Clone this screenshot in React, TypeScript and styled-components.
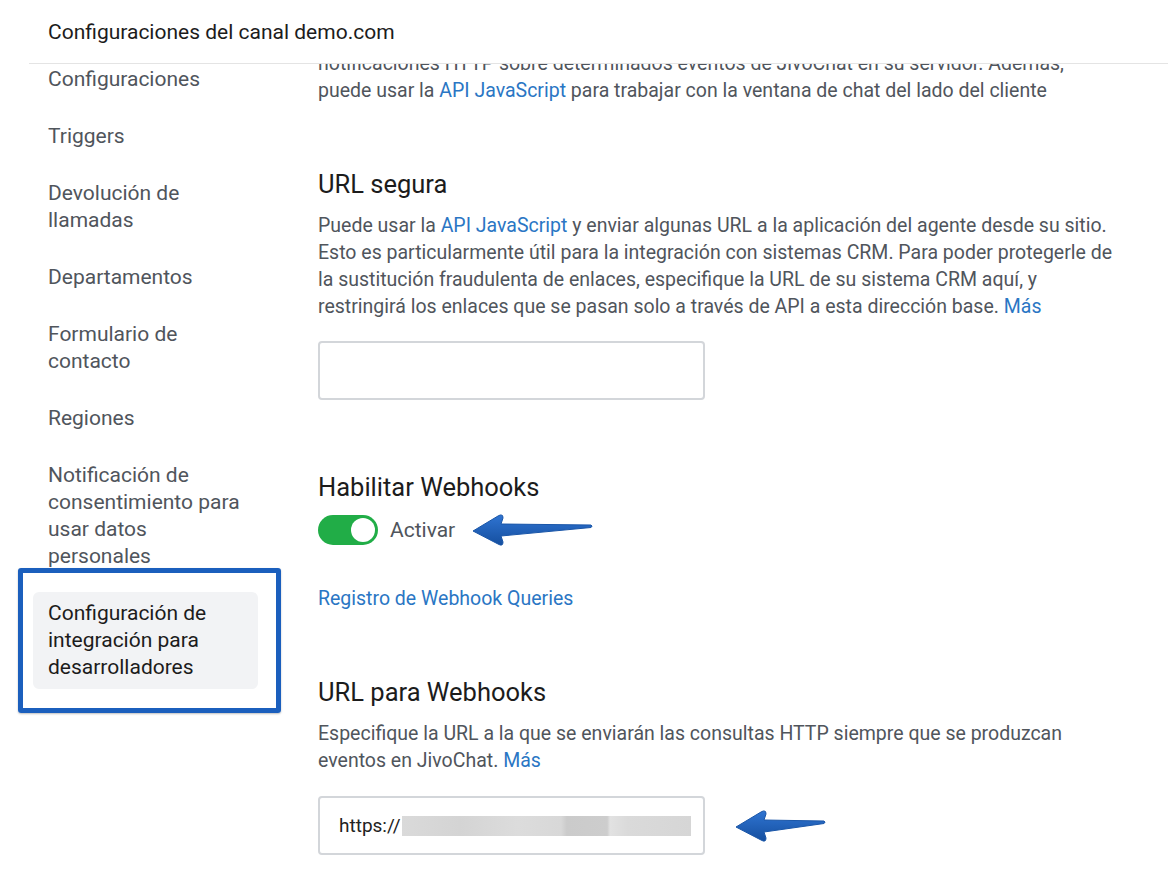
import styled, { createGlobalStyle } from 'styled-components';

const GlobalStyle = createGlobalStyle`
  html, body {
    margin: 0;
    padding: 0;
    background: #ffffff;
  }

  body {
    font-family: Roboto, "Liberation Sans", Arial, sans-serif;
    -webkit-font-smoothing: antialiased;
  }
`;

const Page = styled.div`
  width: 1168px;
  height: 879px;
  overflow: hidden;
  display: flex;
  flex-direction: column;
  background: #ffffff;
`;

const Header = styled.header`
  position: relative;
  z-index: 2;
  display: flex;
  align-items: center;

  height: 63px;
  margin-left: 29px;
  padding-left: 19px;

  border-bottom: 1px solid #e4e4e4;
  background: #ffffff;

  font-size: 21px;
  color: #1c1c1c;
`;

const Body = styled.div`
  display: flex;
  flex: 1;
  min-height: 0;
  overflow: hidden;
`;

const Sidebar = styled.nav`
  display: flex;
  flex-direction: column;
  gap: 14px;

  width: 318px;
  flex-shrink: 0;
  margin-top: -6px;
  padding-left: 33px;
  box-sizing: border-box;
`;

const NavItem = styled.div<{ $active?: boolean }>`
  position: relative;
  width: 225px;
  box-sizing: border-box;
  padding: 8px 15px;

  border-radius: 6px;
  background: ${(p) => (p.$active ? '#f2f3f5' : 'transparent')};

  font-size: 21px;
  line-height: 27px;
  color: ${(p) => (p.$active ? '#1c1c1c' : '#50555c')};

  ${(p) =>
    p.$active &&
    `
    &::after {
      content: '';
      position: absolute;
      top: -24px;
      left: -15px;
      right: -23px;
      bottom: -24px;
      border: 5px solid #1b5fbd;
      border-radius: 3px;
      box-shadow: 0 1px 2px rgba(0, 0, 0, 0.25);
      pointer-events: none;
    }
  `}
`;

const Main = styled.main`
  flex: 1;
  min-width: 0;
  display: flex;
  flex-direction: column;
  align-items: flex-start;
`;

const Paragraph = styled.p<{ $top?: number }>`
  margin: ${(p) => p.$top ?? 0}px 0 0;
  max-width: 802px;

  font-size: 19.5px;
  line-height: 27px;
  color: #50555c;
`;

const Link = styled.a`
  color: #2a76c4;
  text-decoration: none;
  cursor: pointer;
`;

const Heading = styled.h2<{ $top: number }>`
  margin: ${(p) => p.$top}px 0 0;

  font-size: 25.5px;
  font-weight: 400;
  line-height: 32px;
  color: #1c1c1c;
`;

const FieldRow = styled.div<{ $top: number }>`
  display: flex;
  align-items: center;
  margin-top: ${(p) => p.$top}px;
`;

const Input = styled.div`
  display: flex;
  align-items: center;

  width: 387px;
  height: 59px;
  box-sizing: border-box;
  padding: 0 12px 0 19px;

  border: 2px solid #d3d6da;
  border-radius: 4px;
  background: #ffffff;

  font-size: 19px;
  color: #222222;
`;

const Blurred = styled.span`
  display: inline-block;
  flex: 1;
  height: 20px;
  margin-left: 1px;
  background: linear-gradient(
    90deg,
    #dadada 0%,
    #d4d4d4 20%,
    #dcdcdc 40%,
    #d8d8d8 55%,
    #cbcbcb 57%,
    #cdcdcd 71%,
    #e2e2e2 72%,
    #dadada 78%,
    #d6d6d6 100%
  );
`;

const Toggle = styled.span<{ $on: boolean }>`
  position: relative;
  display: inline-block;
  width: 60px;
  height: 30px;
  border-radius: 15px;
  background: ${(p) => (p.$on ? '#21ad47' : '#c8c8c8')};

  &::after {
    content: '';
    position: absolute;
    top: 3px;
    left: ${(p) => (p.$on ? '33px' : '3px')};
    width: 24px;
    height: 24px;
    border-radius: 50%;
    background: #ffffff;
  }
`;

const ToggleLabel = styled.span`
  margin-left: 12px;
  font-size: 21px;
  color: #50555c;
`;

const ArrowSvg = styled.svg<{ $gap: number }>`
  display: block;
  margin-left: ${(p) => p.$gap}px;
  flex-shrink: 0;
`;

function Arrow({ length, gap, id }: { length: number; gap: number; id: string }) {
  const t = length - 2;
  const d = `M2 18 L27 3 Q32 0 32 5 L30 11 L${t} 12 Q${t + 2} 13 ${t} 14.5 L30 23 L32 29 Q32 34 27 31 Z`;
  return (
    <ArrowSvg $gap={gap} width={length} height={34} viewBox={`0 0 ${length} 34`}>
      <defs>
        <linearGradient id={id} x1="0" y1="0" x2="0" y2="1">
          <stop offset="0" stopColor="#2f74d2" />
          <stop offset="1" stopColor="#154f9f" />
        </linearGradient>
      </defs>
      <path d={d} fill={`url(#${id})`} stroke="#1a56a8" strokeWidth="1" strokeLinejoin="round" />
    </ArrowSvg>
  );
}

const navItems = [
  'Configuraciones',
  'Triggers',
  'Devolución de llamadas',
  'Departamentos',
  'Formulario de contacto',
  'Regiones',
  'Notificación de consentimiento para usar datos personales',
];

export default function App() {
  return (
    <>
      <GlobalStyle />
      <Page>
        <Header>Configuraciones del canal demo.com</Header>
        <Body>
          <Sidebar>
            {navItems.map((item) => (
              <NavItem key={item}>{item}</NavItem>
            ))}
            <NavItem $active>Configuración de integración para desarrolladores</NavItem>
          </Sidebar>

          <Main>
            <Paragraph $top={-14}>
              notificaciones HTTP sobre determinados eventos de JivoChat en su servidor. Además,
              <br />
              puede usar la <Link>API JavaScript</Link> para trabajar con la ventana de chat del lado del cliente
            </Paragraph>

            <Heading $top={64}>URL segura</Heading>
            <Paragraph $top={12}>
              Puede usar la <Link>API JavaScript</Link> y enviar algunas URL a la aplicación del agente desde su
              sitio. Esto es particularmente útil para la integración con sistemas CRM. Para poder protegerle de la
              sustitución fraudulenta de enlaces, especifique la URL de su sistema CRM aquí, y restringirá los
              enlaces que se pasan solo a través de API a esta dirección base. <Link>Más</Link>
            </Paragraph>
            <FieldRow $top={21}>
              <Input />
            </FieldRow>

            <Heading $top={71}>Habilitar Webhooks</Heading>
            <FieldRow $top={10}>
              <Toggle $on />
              <ToggleLabel>Activar</ToggleLabel>
              <Arrow id="arrow-a" length={122} gap={16} />
            </FieldRow>
            <Paragraph $top={38}>
              <Link>Registro de Webhook Queries</Link>
            </Paragraph>

            <Heading $top={64}>URL para Webhooks</Heading>
            <Paragraph $top={12}>
              Especifique la URL a la que se enviarán las consultas HTTP siempre que se produzcan eventos en
              JivoChat. <Link>Más</Link>
            </Paragraph>
            <FieldRow $top={22}>
              <Input>
                https://
                <Blurred />
              </Input>
              <Arrow id="arrow-b" length={92} gap={29} />
            </FieldRow>
          </Main>
        </Body>
      </Page>
    </>
  );
}
